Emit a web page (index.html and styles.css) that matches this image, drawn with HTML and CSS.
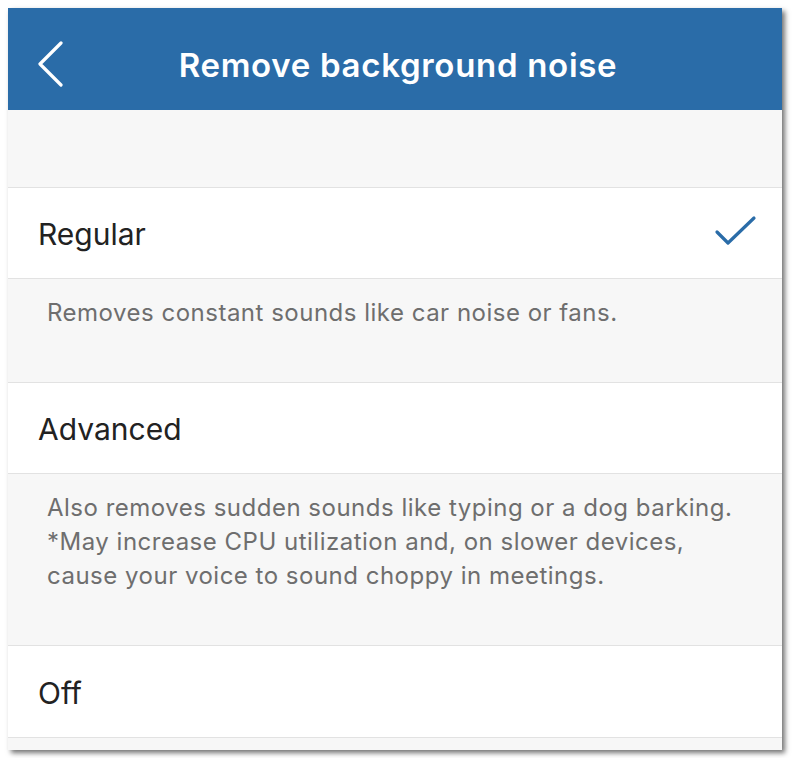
FILE: index.html
```html
<!DOCTYPE html>
<html lang="en">
<head>
<meta charset="utf-8">
<title>Remove background noise</title>
<link rel="stylesheet" href="styles.css">
</head>
<body>
<div class="screen">
  <header class="nav">
    <button class="back" aria-label="Back">
      <svg width="30" height="46" viewBox="0 0 30 46"><path d="M24 2 L3 23 L24 44" fill="none" stroke="#fff" stroke-width="3.2" stroke-linecap="round" stroke-linejoin="round"/></svg>
    </button>
    <h1 class="title">Remove background noise</h1>
  </header>
  <div class="spacer"></div>
  <ul class="options">
    <li class="option">
      <span class="label">Regular</span>
      <svg class="check" width="44" height="34" viewBox="0 0 44 34"><path d="M3 17 L14 28 L40 3" fill="none" stroke="#2a6ca8" stroke-width="3.2" stroke-linecap="round" stroke-linejoin="round"/></svg>
    </li>
    <li class="note">Removes constant sounds like car noise or fans.</li>
    <li class="option"><span class="label">Advanced</span></li>
    <li class="note">Also removes sudden sounds like typing or a dog barking.<br>*May increase CPU utilization and, on slower devices,<br>cause your voice to sound choppy in meetings.</li>
    <li class="option option-last"><span class="label">Off</span></li>
  </ul>
  <div class="tail"></div>
</div>
</body>
</html>
```
FILE: styles.css
```css
* { box-sizing: border-box; }
html, body { margin: 0; padding: 0; background: #fff; }
body {
  font-family: Inter, "Noto Sans", sans-serif;
  padding: 8px;
}
.screen {
  width: 774px;
  height: 742px;
  background: #f7f7f7;
  box-shadow: 3px 3px 5px rgba(0, 0, 0, 0.55);
  display: flex;
  flex-direction: column;
  overflow: hidden;
}
.nav {
  height: 102px;
  background: #2a6ca8;
  display: flex;
  align-items: center;
  justify-content: center;
  position: relative;
}
.back {
  position: absolute;
  left: 29px;
  top: 33px;
  border: 0;
  padding: 0;
  background: none;
  display: flex;
}
.title {
  margin: 0;
  color: #fff;
  font-size: 33px;
  font-weight: 600;
  letter-spacing: 0.7px;
  padding-top: 12px;
  padding-left: 6px;
}
.spacer { height: 77px; }
.options {
  list-style: none;
  margin: 0;
  padding: 0;
  border-top: 1px solid #e2e2e2;
}
.option {
  height: 91px;
  background: #fff;
  border-bottom: 1px solid #e2e2e2;
  display: flex;
  align-items: center;
  justify-content: space-between;
  padding: 2px 24px 0 30px;
}
.option-last { height: 92px; }
.label {
  font-size: 30px;
  color: #222;
}
.check { margin-top: -4px; }
.note {
  padding: 17px 30px 52px 39px;
  font-size: 24px;
  line-height: 34px;
  letter-spacing: 0.5px;
  color: #6e6e6e;
  border-bottom: 1px solid #e2e2e2;
}
.tail { flex: 1; }
```
